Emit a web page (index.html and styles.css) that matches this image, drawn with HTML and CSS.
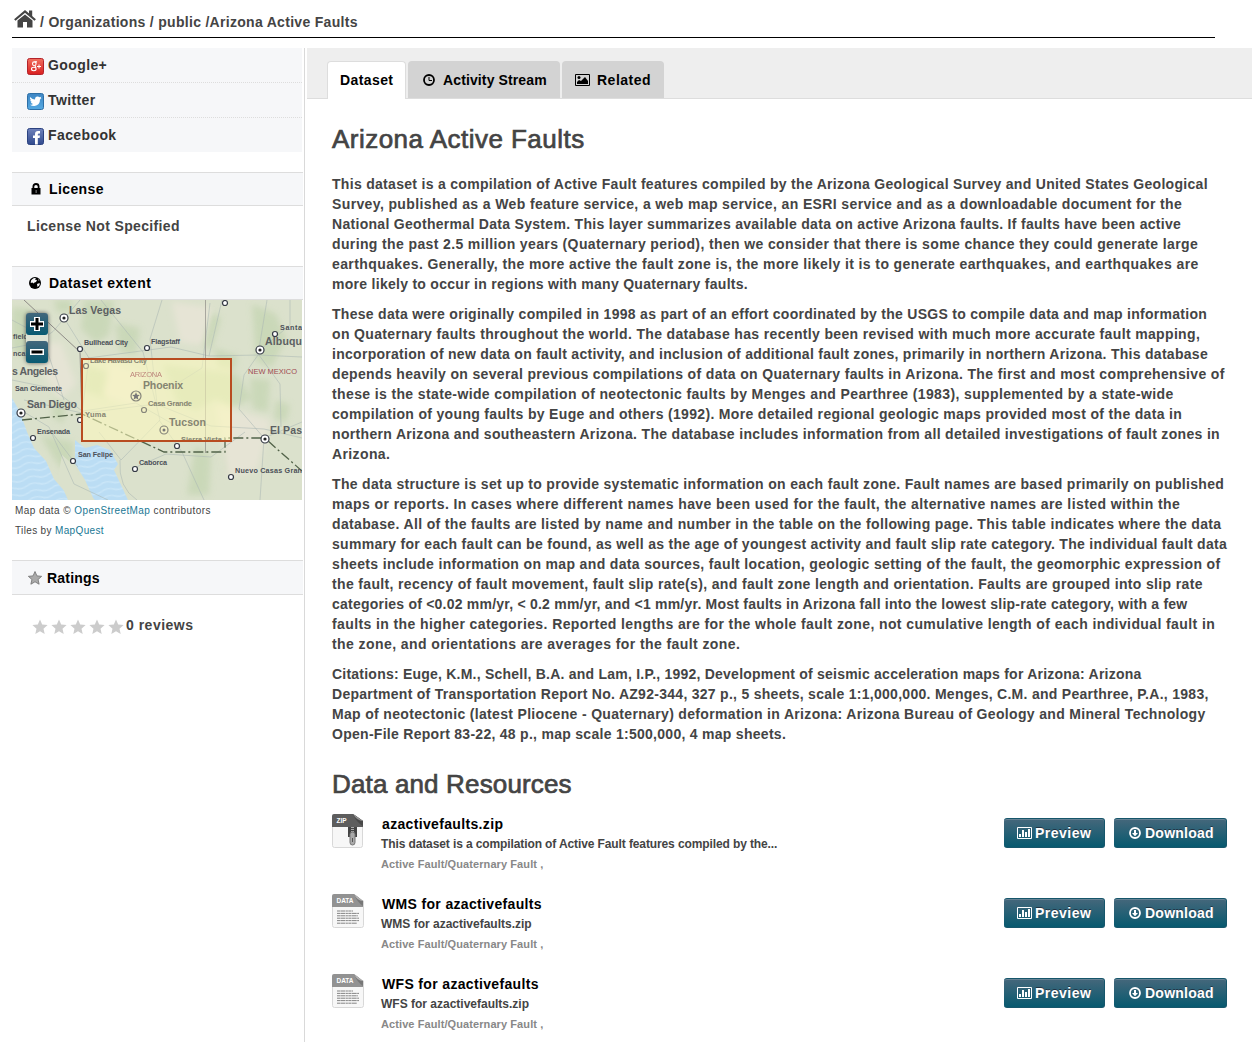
FILE: index.html
```html
<!DOCTYPE html>
<html lang="en">
<head>
<meta charset="utf-8">
<title>Arizona Active Faults</title>
<link rel="stylesheet" href="styles.css">
</head>
<body>
<svg class="defs" width="0" height="0" aria-hidden="true">
  <defs>
    <linearGradient id="gRed" x2="0" y2="1"><stop stop-color="#f0705f"/><stop offset="1" stop-color="#d91f1f"/></linearGradient>
    <linearGradient id="gSky" x2="0" y2="1"><stop stop-color="#3e86c4"/><stop offset="1" stop-color="#54a9e2"/></linearGradient>
    <linearGradient id="gNavy" x2="0" y2="1"><stop stop-color="#6f82bb"/><stop offset="1" stop-color="#304a8e"/></linearGradient>
    <symbol id="star" viewBox="0 0 16 16"><path d="M8 .6l2.200 5 5.400.5-4.100 3.600 1.200 5.400L8 12.300l-4.700 2.800 1.200-5.400L.4 6.100l5.400-.5z"/></symbol>
    <symbol id="chart" viewBox="0 0 15 12"><path fill="none" stroke="#fff" d="M.5.5h14v11H.5z"/><path fill="#fff" d="M2 7h2v3H2zM5 3h2v7H5zM8 5h2v5H8zM11 2h2v8h-2z"/></symbol>
    <symbol id="down" viewBox="0 0 12 12"><circle cx="6" cy="6" r="5" fill="none" stroke="#fff" stroke-width="1.800"/><path fill="#fff" d="M5 3h2v3h2L6 9.200 3 6h2z"/></symbol>
    <symbol id="datafile" viewBox="0 0 32 34">
      <path fill="#f7f7f7" stroke="#d8d8d8" d="M.5 2h31v29.500q0 2-2 2h-27q-2 0-2-2z"/>
      <path fill="#929292" d="M0 13V2q0-2 2-2h20l9 7v6z"/><path fill="#fff" d="M22 0h10v7z"/><path fill="#777" d="M22 0l9 7v5q-6-4-9-12z"/><path fill="#b4b4b4" d="M22 0l9 7q-6 0-9-7z"/>
      <text x="4.500" y="9" font-size="6.500" fill="#fff" textLength="17" letter-spacing="0">DATA</text>
      <path stroke="#777" stroke-width=".9" stroke-dasharray="3 .4 5 .5 2 .4" d="M5 17h16M5 19.400h22M5 21.800h21M5 24.200h22M5 26.600h22M5 29.200h20"/>
    </symbol>
  </defs>
</svg>
<nav class="crumbs">
  <svg width="22" height="18" viewBox="0 0 22 18"><path fill="#444" d="M11 4.500l7.500 6V17.500H13v-5.500H9v5.500H3.500v-7z"/><path fill="none" stroke="#444" stroke-width="2.200" d="M.8 10L11 1.500 21.200 10"/><path fill="#444" d="M15 .5h3.200v6.500L15 4.500z"/></svg>
  <span>/ Organizations / public /Arizona Active Faults</span>
</nav>
<div class="page">
  <aside class="side">
    <ul class="social">
      <li><svg width="17" height="17"><rect x=".5" y=".5" width="16" height="16" rx="2" fill="url(#gRed)" stroke="#b3222a"/><g fill="none" stroke="#fff" stroke-width="1.100"><ellipse cx="7.300" cy="5.800" rx="1.800" ry="1.900"/><path d="M7.500 3.900h2.500M8 7.700l1 2"/><ellipse cx="6.800" cy="11" rx="2.300" ry="1.700"/><path d="M10 8.500h4M12 6.500v4" stroke-width="1"/></g></svg>Google+</li>
      <li><svg width="17" height="17"><rect x=".5" y=".5" width="16" height="16" rx="2" fill="url(#gSky)" stroke="#2d6fa6"/><path fill="#fff" d="M3 4q2.500 2.500 5 2.500Q8 3.500 10.500 3.500q1.300 0 2 .8l1.800-.6-.8 1.500 1 .1-1.500 1.300q0 6-5.500 6.400-2.500.2-4.500-1.200 2 0 3-.9-1.800-.3-2.200-1.800h1Q3.200 8.500 3.200 7l.9.200Q2.500 6 3 4z"/></svg>Twitter</li>
      <li><svg width="17" height="17"><rect x=".5" y=".5" width="16" height="16" rx="2" fill="url(#gNavy)" stroke="#2b4280"/><path fill="#fff" d="M8 16.500V10H6V7.500h2V6q0-3 3-3h2v2.500h-1.200q-1 0-1 1v1H13l-.4 2.500h-1.800v6.500z"/></svg>Facebook</li>
    </ul>
    <h3 class="bar license"><svg width="10" height="12"><path fill="none" stroke="#000" stroke-width="1.800" d="M2.400 6V3.500q0-2.500 2.600-2.500t2.600 2.500V6"/><path d="M.5 5h9v6.500h-9z"/><path fill="#aaa" d="M4.700 7h.8v3h-.8z"/></svg>License</h3>
    <p class="unspecified">License Not Specified</p>
    <h3 class="bar extent"><svg width="12" height="12"><circle cx="6" cy="6" r="6"/><path fill="#f6f7f9" d="M5 1l2 .2-1 1.500 2 .3-1 2-1.500.5-1 1-1-1-1.800.5L2 3.500 3.500 2zM9 1.800l1.500 2-1-.3zM8 7l2-.8 1 .3-.7 2-1.800 1.500z"/></svg>Dataset extent</h3>
    <div class="map">
      <svg width="290" height="200" viewBox="0 0 290 200">
        <defs><pattern id="waves" width="24" height="7" patternUnits="userSpaceOnUse" patternTransform="rotate(-12)"><rect width="24" height="7" fill="#bbddf4"/><path d="M0 3q6-3 12 0t12 0" fill="none" stroke="#cae6f8" stroke-width="1.500"/></pattern>
        <filter id="soft" x="-20%" y="-20%" width="140%" height="140%"><feGaussianBlur stdDeviation="3"/></filter></defs>
        <rect width="290" height="200" fill="#dbe1cc"/>
        <g filter="url(#soft)" fill="#c5d5b2" opacity=".75"><path d="M72 0h30l-5 35-13 8-15-14zM103 23l25 5-4 27-16-4zM42 0h18v12H45zM0 8h18l9 32-12 20L0 48zM42 98l12 8-3 18-11-8zM240 4l24 10 10 25-14 28-16-5zM186 42l13-30 10 6-10 32zM202 48l24 8-3 14-17-3zM150 64l75 10 15 25-19 8-18-8-18 12-20-8zM75 65l28 10-8 24-24-8zM238 78l20 2-2 32-15-3zM212 145l18-4-3 28-12 5zM183 146l16 10-2 39h-22zM28 135l34 7-3 36-15-16zM264 100l14 5-4 17-12-3z"/></g>
        <g filter="url(#soft)" fill="#e6e4d5"><path d="M24 45l25-3 15 42-16 15-17-25zM160 2l40 6-9 38-23-4zM204 105l55 15-14 50-30 8zM98 62l35 12-8 34-34-12z"/></g>
        <path fill="url(#waves)" d="M0 98l8 14 7 20 7 16 12 13 8 18 18 21H0zM63 140l10 8 12-3 13 5 8 14-4 6 8 17 6 13H82l-9-20-10-16z"/>
        <path fill="#dbe1cc" d="M50 155l14 12 3 18 16 15H56l-10-23z"/>
        <g fill="none" stroke="#aab7b4" stroke-width=".8" opacity=".7">
          <path d="M0 48q35-4 50-27L68 0M52 18l25 40-7 55-58-13M76 58l83-11 38 9 50-1 43 2M89 0l42 52 17 68-39 40-22-28M0 80l39 8 34 25 71-9 55 22 53 3 38 9M0 20l30 16 22 64M155 90l35-22 8-65M197 56l13-56M159 123l-35-20-53 8M147 120l23 32 22 48M108 160q-2 28 17 40M122 168l32-14 45 3 34-25M252 138l-25-29 5-34 14-20 9-55M252 138l-4 62M252 138l38-16M247 55l21 29 1 43M12 112l25 15 25 57 34 16M38 130l28 37M145 104l-7-65 12-39M248 50l30-25V0"/>
        </g>
        <g fill="none" stroke="#85817e" stroke-width=".9"><path d="M12 0l56 52 2 66"/><path d="M193.500 0v153" opacity=".7"/></g>
        <path fill="none" stroke="#526349" stroke-width="1.300" stroke-dasharray="10 3 2 3" d="M10 120l60-6 82 38h61v-14h40l12 11 25 22"/>
        <rect x="70" y="59" width="149" height="82" fill="#fffcbe" fill-opacity=".55"/>
        <g class="places">
          <g fill="#fff" stroke="#343944"><circle cx="52" cy="18" r="4"/><circle cx="248" cy="50" r="4"/><circle cx="9" cy="113" r="4"/><circle cx="253" cy="139" r="4"/><circle cx="68" cy="49" r="2.500"/><circle cx="135" cy="48" r="2.500"/><circle cx="21" cy="138" r="2.500"/><circle cx="61" cy="161" r="2.500"/><circle cx="123" cy="169" r="2.500"/><circle cx="165" cy="146" r="2.500"/><circle cx="219" cy="177" r="2.500"/><circle cx="213" cy="3" r="2.500"/><circle cx="263" cy="34" r="2.500"/><circle cx="68" cy="120" r="2.500"/></g>
          <g fill="#222"><circle cx="52" cy="18" r="1.600"/><circle cx="248" cy="50" r="1.600"/><circle cx="9" cy="113" r="1.600"/><circle cx="253" cy="139" r="1.600"/></g>
          <g fill="#f3f1c5" stroke="#85857a"><circle cx="124" cy="96" r="5"/><circle cx="152" cy="130" r="4"/><circle cx="132" cy="110" r="2.500"/><circle cx="74" cy="66" r="2.500"/></g>
          <use href="#star" x="120" y="92" width="8" height="8" fill="#777"/><circle cx="152" cy="130" r="1.500" fill="#777"/>
          <g class="big"><text x="57" y="14" textLength="52">Las Vegas</text><text x="253" y="45" textLength="37">Albuqu</text><text x="0" y="75" textLength="46">s Angeles</text><text x="15" y="108" textLength="50">San Diego</text><text x="258" y="134" textLength="32">El Pas</text></g>
          <g class="small"><text x="72" y="45" textLength="44">Bullhead City</text><text x="139" y="44" textLength="29">Flagstaff</text><text x="268" y="30" textLength="22">Santa</text><text x="1" y="39">field</text><text x="1" y="56">nca</text><text x="3" y="91" textLength="47">San Clemente</text><text x="25" y="134" textLength="33">Ensenada</text><text x="66" y="157" textLength="35">San Felipe</text><text x="127" y="165" textLength="28">Caborca</text><text x="223" y="173" textLength="67">Nuevo Casas Gran</text></g>
          <g class="faint"><text x="78" y="63" textLength="57">Lake Havasu City</text><text x="73" y="117" textLength="21">Yuma</text><text x="136" y="106" textLength="44">Casa Grande</text><text x="169" y="142" textLength="41">Sierra Vista</text><text class="big" x="131" y="89" textLength="40">Phoenix</text><text class="big" x="157" y="126" textLength="37">Tucson</text></g>
          <text class="state" x="118" y="77" textLength="32" opacity=".65">ARIZONA</text><text class="state" x="236" y="74" textLength="49">NEW MEXICO</text>
        </g>
        <rect x="70" y="59" width="149" height="82" fill="none" stroke="#b84c20" stroke-width="2"/>
      </svg>
      <div class="zoomer">
        <b><svg width="16" height="16"><path fill="#fff" d="M5 1h6v4h4v6h-4v4H5v-4H1V5h4z"/><path d="M6.500 2h3v4.500H14v3H9.500V14h-3V9.500H2v-3h4.500z"/></svg></b>
        <b><svg width="16" height="16"><path fill="#fff" d="M1 5h14v6H1z"/><path d="M2.500 6.500h11v3h-11z"/></svg></b>
      </div>
    </div>
    <p class="credit">Map data © <a>OpenStreetMap</a> contributors</p>
    <p class="credit tiles">Tiles by <a>MapQuest</a></p>
    <h3 class="bar ratings"><svg width="16" height="16" fill="#aaa" stroke="#777"><use href="#star" x="1" y="1" width="14" height="14"/></svg>Ratings</h3>
    <div class="reviews"><svg width="16" height="16"><use href="#star"/></svg><svg width="16" height="16"><use href="#star"/></svg><svg width="16" height="16"><use href="#star"/></svg><svg width="16" height="16"><use href="#star"/></svg><svg width="16" height="16"><use href="#star"/></svg><span>0 reviews</span></div>
  </aside>
  <main>
    <header class="tabs">
      <div class="tab active">Dataset</div>
      <div class="tab stream"><svg width="12" height="12"><circle cx="6" cy="6" r="5" fill="none" stroke="#000" stroke-width="1.800"/><path fill="none" stroke="#000" d="M6 3v3.500h3"/></svg>Activity Stream</div>
      <div class="tab related"><svg width="15" height="12"><path fill="none" stroke="#000" d="M.5.5h14v11H.5z"/><circle cx="4" cy="3.500" r="1.500"/><path d="M2 10V8l2-2 2 1 4-4 3 4v3z"/></svg>Related</div>
    </header>
    <article>
      <h1>Arizona Active Faults</h1>
      <p><span class="t4">This dataset is a compilation of Active Fault features compiled by the Arizona Geological Survey and United States Geological</span>
<span class="t1">Survey, published as a Web feature service, a web map service, an ESRI service and as a downloadable document for the</span>
<span class="t4">National Geothermal Data System. This layer summarizes available data on active Arizona faults. If faults have been active</span>
<span class="t1">during the past 2.5 million years (Quaternary period), then we consider that there is some chance they could generate large</span>
<span>earthquakes. Generally, the more active the fault zone is, the more likely it is to generate earthquakes, and earthquakes are</span>
<span class="t5">more likely to occur in regions with many Quaternary faults.</span></p>
      <p><span class="t5">These data were originally compiled in 1998 as part of an effort coordinated by the USGS to compile data and map information</span>
<span class="t2">on Quaternary faults throughout the world. The database has recently been revised with much more accurate fault mapping,</span>
<span class="t5">incorporation of new data on fault activity, and inclusion of additional fault zones, primarily in northern Arizona. This database</span>
<span class="t2">depends heavily on several previous compilations of data on Quaternary faults in Arizona. The first and most comprehensive of</span>
<span class="t1">these is the state-wide compilation of neotectonic faults by Menges and Pearthree (1983), supplemented by a state-wide</span>
<span class="t3">compilation of young faults by Euge and others (1992). More detailed regional geologic maps provided most of the data in</span>
<span class="t3">northern Arizona and southeastern Arizona. The database includes information from all detailed investigations of fault zones in</span>
<span class="t1">Arizona.</span></p>
      <p><span class="t3">The data structure is set up to provide systematic information on each fault zone. Fault names are based primarily on published</span>
<span class="t0">maps or reports. In cases where different names have been used for the fault, the alternative names are listed within the</span>
<span class="t2">database. All of the faults are listed by name and number in the table on the following page. This table indicates where the data</span>
<span class="t4">summary for each fault can be found, as well as the age of youngest activity and fault slip rate category. The individual fault data</span>
<span class="t2">sheets include information on map and data sources, fault location, geologic setting of the fault, the geomorphic expression of</span>
<span class="t2">the fault, recency of fault movement, fault slip rate(s), and fault zone length and orientation. Faults are grouped into slip rate</span>
<span class="t6">categories of &lt;0.02 mm/yr, &lt; 0.2 mm/yr, and &lt;1 mm/yr. Most faults in Arizona fall into the lowest slip-rate category, with a few</span>
<span>faults in the higher categories. Reported lengths are for the whole fault zone, not cumulative length of each individual fault in</span>
<span class="t0">the zone, and orientations are averages for the fault zone.</span></p>
      <p><span class="t6">Citations: Euge, K.M., Schell, B.A. and Lam, I.P., 1992, Development of seismic acceleration maps for Arizona: Arizona</span>
<span class="t5">Department of Transportation Report No. AZ92-344, 327 p., 5 sheets, scale 1:1,000,000. Menges, C.M. and Pearthree, P.A., 1983,</span>
<span class="t3">Map of neotectonic (latest Pliocene - Quaternary) deformation in Arizona: Arizona Bureau of Geology and Mineral Technology</span>
<span class="t5">Open-File Report 83-22, 48 p., map scale 1:500,000, 4 map sheets.</span></p>
      <h2>Data and Resources</h2>
      <section class="resource">
        <svg width="32" height="34"><path fill="#f7f7f7" stroke="#d8d8d8" d="M.5 2h30v29.500q0 2-2 2h-26q-2 0-2-2z"/><path fill="#5d5d5d" d="M0 13V2q0-2 2-2h20l9 7v6z"/><path fill="#fff" d="M21 0h11v7z"/><path fill="#484848" d="M21 0l10 7v5q-7-4-10-12z"/><path fill="#949494" d="M21 0l10 7q-6 0-10-7z"/><text x="4.500" y="9" font-size="6.500" fill="#fff" textLength="10" letter-spacing="0">ZIP</text><path fill="#444" d="M16 13h9v10h-9z"/><path stroke="#aaa" stroke-dasharray="1 1" stroke-width="3" d="M20.500 13v6"/><rect x="18" y="18" width="5" height="13" rx="2.500" fill="#aaa" stroke="#777"/><path stroke="#555" d="M20.500 24v4"/></svg>
        <div class="info"><h4>azactivefaults.zip</h4><p class="desc long">This dataset is a compilation of Active Fault features compiled by the...</p><p class="tag">Active Fault/Quaternary Fault ,</p></div>
        <div class="btn"><svg width="15" height="12"><use href="#chart"/></svg>Preview</div><div class="btn dl"><svg width="12" height="12"><use href="#down"/></svg>Download</div>
      </section>
      <section class="resource">
        <svg width="32" height="34"><use href="#datafile"/></svg>
        <div class="info"><h4>WMS for azactivefaults</h4><p class="desc">WMS for azactivefaults.zip</p><p class="tag">Active Fault/Quaternary Fault ,</p></div>
        <div class="btn"><svg width="15" height="12"><use href="#chart"/></svg>Preview</div><div class="btn dl"><svg width="12" height="12"><use href="#down"/></svg>Download</div>
      </section>
      <section class="resource">
        <svg width="32" height="34"><use href="#datafile"/></svg>
        <div class="info"><h4>WFS for azactivefaults</h4><p class="desc">WFS for azactivefaults.zip</p><p class="tag">Active Fault/Quaternary Fault ,</p></div>
        <div class="btn"><svg width="15" height="12"><use href="#chart"/></svg>Preview</div><div class="btn dl"><svg width="12" height="12"><use href="#down"/></svg>Download</div>
      </section>
    </article>
  </main>
</div>
</body>
</html>
```
FILE: styles.css
```css
* { box-sizing: border-box; }
html, body { height: 1042px; overflow: hidden; }
body { margin: 0; background: #fff; color: #444; font: bold 14px/20px "Liberation Sans", Arial, sans-serif; letter-spacing: .4px; white-space: nowrap; }
h1, h2, h3, h4, p, ul { margin: 0; padding: 0; list-style: none; }
svg { flex: none; display: block; }
.defs { position: absolute; }
.crumbs { display: flex; gap: 4px; width: 1203px; height: 38px; margin-left: 12px; padding: 10px 2px 0; border-bottom: 1px solid #000; line-height: 24px; letter-spacing: .3px; }
.page { display: flex; height: 994px; margin-top: 10px; }
.side { width: 293px; margin-left: 12px; border-right: 1px solid #d9d9d9; }
.social { width: 290px; height: 104px; background: #f6f7f9; color: #333; }
.social li { display: flex; gap: 4px; height: 35px; padding: 7px 15px 0; border-bottom: 1px dotted #ddd; }
.social li:last-child { height: 34px; border: 0; }
.social svg { margin-top: 3px; }
.bar { display: flex; align-items: center; width: 291px; height: 34px; background: #f6f7f9; border: 1px solid #ddd; border-width: 1px 0; color: #000; font-size: 14px; }
.license { margin-top: 20px; padding-left: 19px; gap: 8px; }
.unspecified { padding: 10px 15px 30px; letter-spacing: .35px; }
.extent { padding-left: 17px; gap: 8px; letter-spacing: .47px; }
.map { position: relative; width: 290px; height: 200px; overflow: hidden; }
.places { letter-spacing: 0; font-size: 7.5px; fill: #4b5058; }
.places circle { stroke-width: 1.2; }
.places .big { font-size: 10.5px; fill: #5c6062; }
.places .small { font-size: 7.2px; }
.places .faint, .places .faint .big { fill: #858471; }
.places .state { font-weight: normal; fill: #a04b52; }
.zoomer { position: absolute; left: 14px; top: 13px; width: 22px; height: 50px; display: flex; flex-direction: column; justify-content: space-between; border-radius: 4px; background: #dee3d5; box-shadow: 0 0 4px #555; }
.zoomer b { display: grid; place-items: center; height: 22px; border-radius: 3px; background: linear-gradient(#43677c, #075a72); }
.credit { padding: 1px 3px 0; font-weight: normal; font-size: 10px; letter-spacing: .42px; height: 20px; }
.tiles { letter-spacing: .35px; }
.credit a { color: #187794; }
.ratings { height: 35px; margin-top: 20px; padding-left: 15px; gap: 4px; letter-spacing: .2px; }
.reviews { display: flex; gap: 3px; padding: 20px 20px 0; fill: #ccc; }
.reviews svg { margin-top: 4px; }
.reviews span { letter-spacing: .5px; margin-left: -1px; }
main { width: 945px; margin-left: 2px; }
.tabs { display: flex; gap: 2px; height: 51px; padding: 13px 20px 0; background: #eee; border-bottom: 1px solid #ddd; color: #000; }
.tab { display: flex; align-items: center; height: 37px; border-radius: 4px 4px 0 0; background: #d3d3d3; }
.tab.active { width: 79px; height: 38px; padding: 0 0 1px 12px; background: #fff; border: 1px solid #ddd; border-bottom: 0; }
.stream { width: 152px; padding-left: 15px; gap: 8px; letter-spacing: .12px; }
.related { width: 102px; padding-left: 13px; gap: 7px; letter-spacing: .5px; }
article { padding: 20px 25px 0; }
h1, h2 { font-size: 26px; line-height: 40px; font-weight: normal; -webkit-text-stroke: .7px #444; }
h1 { margin-bottom: 15px; letter-spacing: .47px; }
h2 { margin: 20px 0 10px; letter-spacing: .15px; }
article > p { margin-bottom: 10px; }
article > p span { display: block; }
/* tracking steps for the description lines */
.t0 { letter-spacing: .42px; }
.t1 { letter-spacing: .375px; }
.t2 { letter-spacing: .35px; }
.t3 { letter-spacing: .33px; }
.t4 { letter-spacing: .3px; }
.t5 { letter-spacing: .282px; }
.t6 { letter-spacing: .225px; }
.resource { display: flex; height: 80px; }
.info { flex: 1; margin-left: 17px; }
h4 { padding-left: 1px; color: #000; font-size: 14px; letter-spacing: .34px; }
.desc { font-size: 12px; letter-spacing: 0; }
.long { letter-spacing: -.11px; }
.tag { font-size: 11px; letter-spacing: .09px; color: #888; }
.btn { display: flex; align-items: center; gap: 3px; width: 101px; height: 30px; margin-top: 4px; padding-left: 13px; border-radius: 3px; border: 1px solid #16566b; border-width: 1px 1px 1px 0; background: linear-gradient(#45677b, #07596f); box-shadow: inset 0 1px #668294; color: #fff; text-shadow: 0 -1px #234; letter-spacing: .5px; }
.dl { width: 113px; margin-left: 9px; padding-left: 15px; gap: 4px; letter-spacing: .25px; }
```
